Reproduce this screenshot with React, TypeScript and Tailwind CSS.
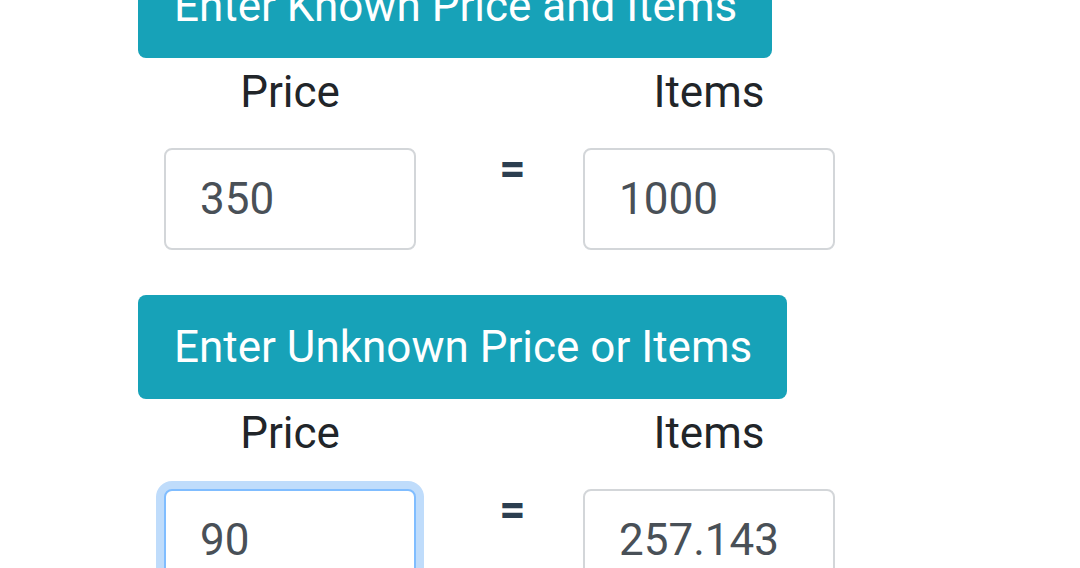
import { useState } from 'react'

function Field({ value, focused }: { value: string; focused?: boolean }) {
  return (
    <div
      className={
        'h-[102px] w-[252px] rounded-[8px] border-2 bg-white pl-[34px] flex items-center text-[44px] text-[#495057] ' +
        (focused ? 'border-[#80bdff] shadow-[0_0_0_8px_#bfdcfb]' : 'border-[#d3d6d9]')
      }
    >
      {value}
    </div>
  )
}

function Row({ price, items, focusPrice }: { price: string; items: string; focusPrice?: boolean }) {
  return (
    <div className="flex pl-[26px]">
      <div className="flex w-[252px] flex-col items-center">
        <div className="flex h-[68px] items-center text-[44px] text-[#212529]">Price</div>
        <div className="mt-[22px]">
          <Field value={price} focused={focusPrice} />
        </div>
      </div>
      <div className="flex w-[167px] justify-center pl-[26px] pt-[87px] text-[46px] font-bold leading-none text-[#2c3e50]">=</div>
      <div className="flex w-[252px] flex-col items-center">
        <div className="flex h-[68px] items-center text-[44px] text-[#212529]">Items</div>
        <div className="mt-[22px]">
          <Field value={items} />
        </div>
      </div>
    </div>
  )
}

export default function App() {
  const [price] = useState('90')
  const ratio = 1000 / 350
  const items = (Number(price) * ratio).toFixed(3)

  return (
    <div className="h-[568px] w-[1080px] overflow-hidden bg-white" style={{ fontFamily: 'Roboto, sans-serif' }}>
      <div className="-mt-[46px] pl-[138px]">
        <div className="flex h-[104px] w-[634px] items-center rounded-[8px] bg-[#17a2b8] pl-[36px] text-[44px] text-white">
          Enter Known Price and Items
        </div>
        <Row price="350" items="1000" />
        <div className="mt-[45px] flex h-[104px] w-[649px] items-center rounded-[8px] bg-[#17a2b8] pl-[36px] text-[44px] text-white">
          Enter Unknown Price or Items
        </div>
        <Row price={price} items={items} focusPrice />
      </div>
    </div>
  )
}
